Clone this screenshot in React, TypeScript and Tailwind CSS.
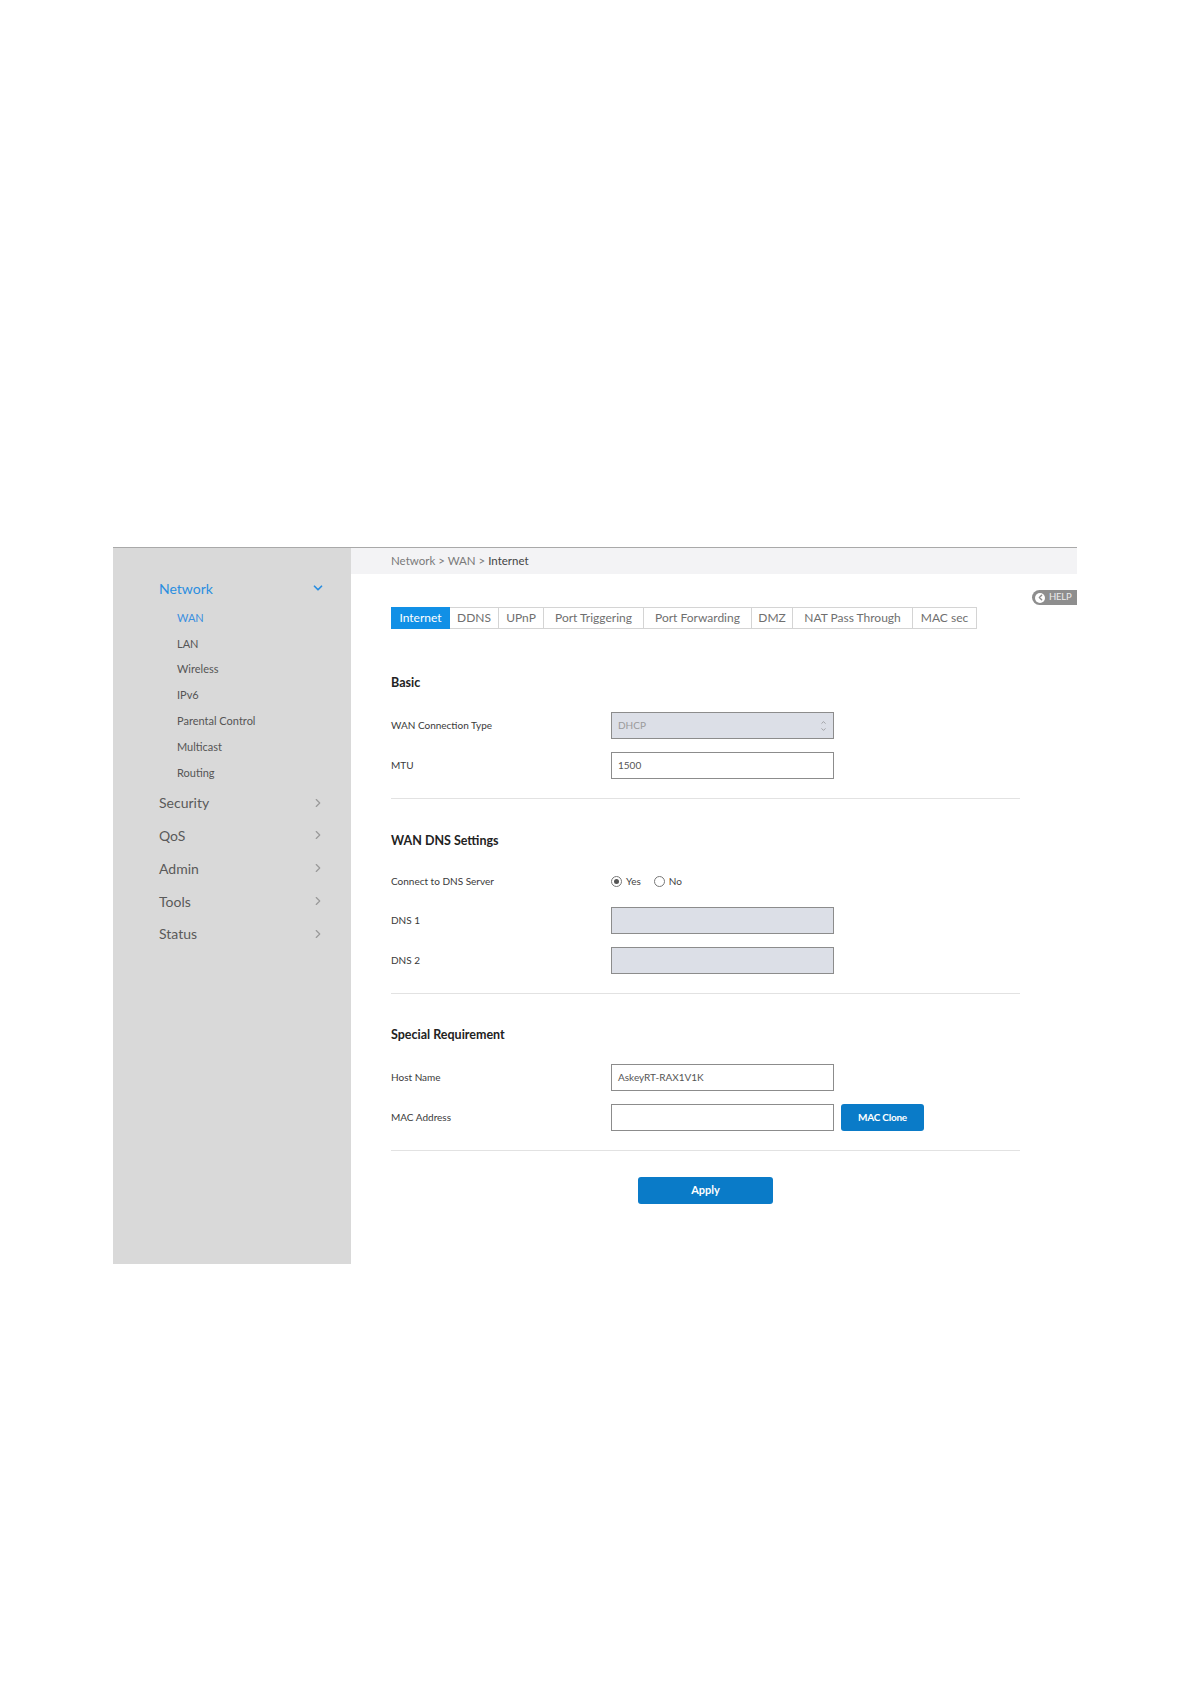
import { ChevronDown, ChevronRight, ChevronLeft, ChevronUp } from 'lucide-react'

const subItems = ['WAN', 'LAN', 'Wireless', 'IPv6', 'Parental Control', 'Multicast', 'Routing']
const mainItems = ['Security', 'QoS', 'Admin', 'Tools', 'Status']
const tabs = [
  { label: 'Internet', w: 'w-[59px]' },
  { label: 'DDNS', w: 'w-[49px]' },
  { label: 'UPnP', w: 'w-[45px]' },
  { label: 'Port Triggering', w: 'w-[100px]' },
  { label: 'Port Forwarding', w: 'w-[108px]' },
  { label: 'DMZ', w: 'w-[41px]' },
  { label: 'NAT Pass Through', w: 'w-[120px]' },
  { label: 'MAC sec', w: 'w-[64px]' },
]

const labelClass = 'w-[220px] shrink-0 text-[10px] text-[#3a3a3a]'
const inputClass = 'w-[223px] h-[27px] border border-[#8c8c8c] px-[6px] flex items-center text-[10px] text-[#555]'
const disabledClass = 'w-[223px] h-[27px] border border-[#8c8c8c] bg-[#dcdfe7] px-[6px] flex items-center text-[10px] text-[#9a9a9a]'

function Row({ label, className = '', children }: { label: string; className?: string; children: React.ReactNode }) {
  return (
    <div className={`flex items-center ${className}`}>
      <div className={labelClass}>{label}</div>
      {children}
    </div>
  )
}

function Radio({ checked, label }: { checked?: boolean; label: string }) {
  return (
    <span className="flex items-center gap-[4px]">
      <span className="w-[11px] h-[11px] rounded-full border border-[#777] bg-white flex items-center justify-center">
        {checked && <span className="w-[5px] h-[5px] rounded-full bg-[#555]" />}
      </span>
      <span className="text-[10px] text-[#444]">{label}</span>
    </span>
  )
}

export default function App() {
  return (
    <div className="min-h-[1684px] bg-white font-['Lato','Open_Sans',sans-serif] pt-[547px] pl-[113px]">
      <div className="w-[964px] border-t border-[#a9a9a9] flex">
        {/* sidebar */}
        <div className="w-[238px] h-[716px] bg-[#d9d9d9] pt-[28px] pl-[46px] pr-[26px]">
          <div className="h-[24px] flex items-center justify-between">
            <span className="text-[14px] text-[#2b8ee0]">Network</span>
            <ChevronDown size={14} strokeWidth={3} className="text-[#2b8ee0]" />
          </div>
          <div className="mt-[5px]">
            {subItems.map((s) => (
              <div key={s} className={`h-[25.9px] flex items-center pl-[18px] text-[11px] ${s === 'WAN' ? 'text-[#3a8fe0]' : 'text-[#555]'}`}>
                {s}
              </div>
            ))}
          </div>
          {mainItems.map((m) => (
            <div key={m} className="h-[32.8px] flex items-center justify-between">
              <span className="text-[14px] text-[#5a5a5a]">{m}</span>
              <ChevronRight size={14} strokeWidth={2} className="text-[#999]" />
            </div>
          ))}
        </div>

        {/* content */}
        <div className="flex-1">
          <div className="h-[26px] bg-[#f3f3f5] pl-[40px] flex items-center text-[11.5px]">
            <span className="text-[#7a7a7a]">Network &gt; WAN &gt;&nbsp;</span>
            <span className="text-[#444]">Internet</span>
          </div>

          <div className="mt-[16px] flex justify-end">
            <div className="h-[15px] w-[45px] bg-[#8e8e8e] rounded-l-full flex items-center pl-[3px] gap-[4px]">
              <span className="w-[10px] h-[10px] rounded-full bg-white flex items-center justify-center">
                <ChevronLeft size={9} strokeWidth={4} className="text-[#8e8e8e]" />
              </span>
              <span className="text-[9.5px] text-[#ececec] tracking-tight">HELP</span>
            </div>
          </div>

          <div className="pl-[40px] w-[669px]">
            <div className="mt-[2px] flex h-[22px]">
              {tabs.map((t, i) => (
                <div
                  key={t.label}
                  className={`${t.w} h-full flex items-center justify-center text-[12px] ${
                    i === 0
                      ? 'bg-[#1190e6] text-white'
                      : `border-y border-r border-[#d4d4d4] text-[#6f6f6f]`
                  }`}
                >
                  {t.label}
                </div>
              ))}
            </div>

            <h2 className="mt-[44px] h-[20px] flex items-center text-[12.5px] font-bold text-[#222]">Basic</h2>
            <Row label="WAN Connection Type" className="mt-[19px]">
              <div className={`${disabledClass} justify-between`}>
                <span>DHCP</span>
                <span className="flex flex-col items-center text-[#777]">
                  <ChevronUp size={7} strokeWidth={2} />
                  <ChevronDown size={7} strokeWidth={2} />
                </span>
              </div>
            </Row>
            <Row label="MTU" className="mt-[13px]">
              <div className={inputClass}>1500</div>
            </Row>
            <div className="mt-[19px] border-t border-[#e2e2e2]" />

            <h2 className="mt-[32px] h-[20px] flex items-center text-[12.5px] font-bold text-[#222]">WAN DNS Settings</h2>
            <Row label="Connect to DNS Server" className="mt-[17px] h-[26px]">
              <div className="flex items-center gap-[13px]">
                <Radio checked label="Yes" />
                <Radio label="No" />
              </div>
            </Row>
            <Row label="DNS 1" className="mt-[13px]">
              <div className={disabledClass} />
            </Row>
            <Row label="DNS 2" className="mt-[13px]">
              <div className={disabledClass} />
            </Row>
            <div className="mt-[19px] border-t border-[#e2e2e2]" />

            <h2 className="mt-[31px] h-[20px] flex items-center text-[12.5px] font-bold text-[#222]">Special Requirement</h2>
            <Row label="Host Name" className="mt-[19px]">
              <div className={inputClass}>AskeyRT-RAX1V1K</div>
            </Row>
            <Row label="MAC Address" className="mt-[13px]">
              <div className={inputClass} />
              <button className="ml-[7px] w-[83px] h-[27px] rounded-[3px] bg-[#0a7bc8] text-white text-[10px] font-bold tracking-tight">
                MAC Clone
              </button>
            </Row>
            <div className="mt-[19px] border-t border-[#e2e2e2]" />

            <div className="mt-[26px] flex justify-center">
              <button className="w-[135px] h-[27px] rounded-[3px] bg-[#0a7bc8] text-white text-[11px] font-bold">Apply</button>
            </div>
          </div>
        </div>
      </div>
    </div>
  )
}
